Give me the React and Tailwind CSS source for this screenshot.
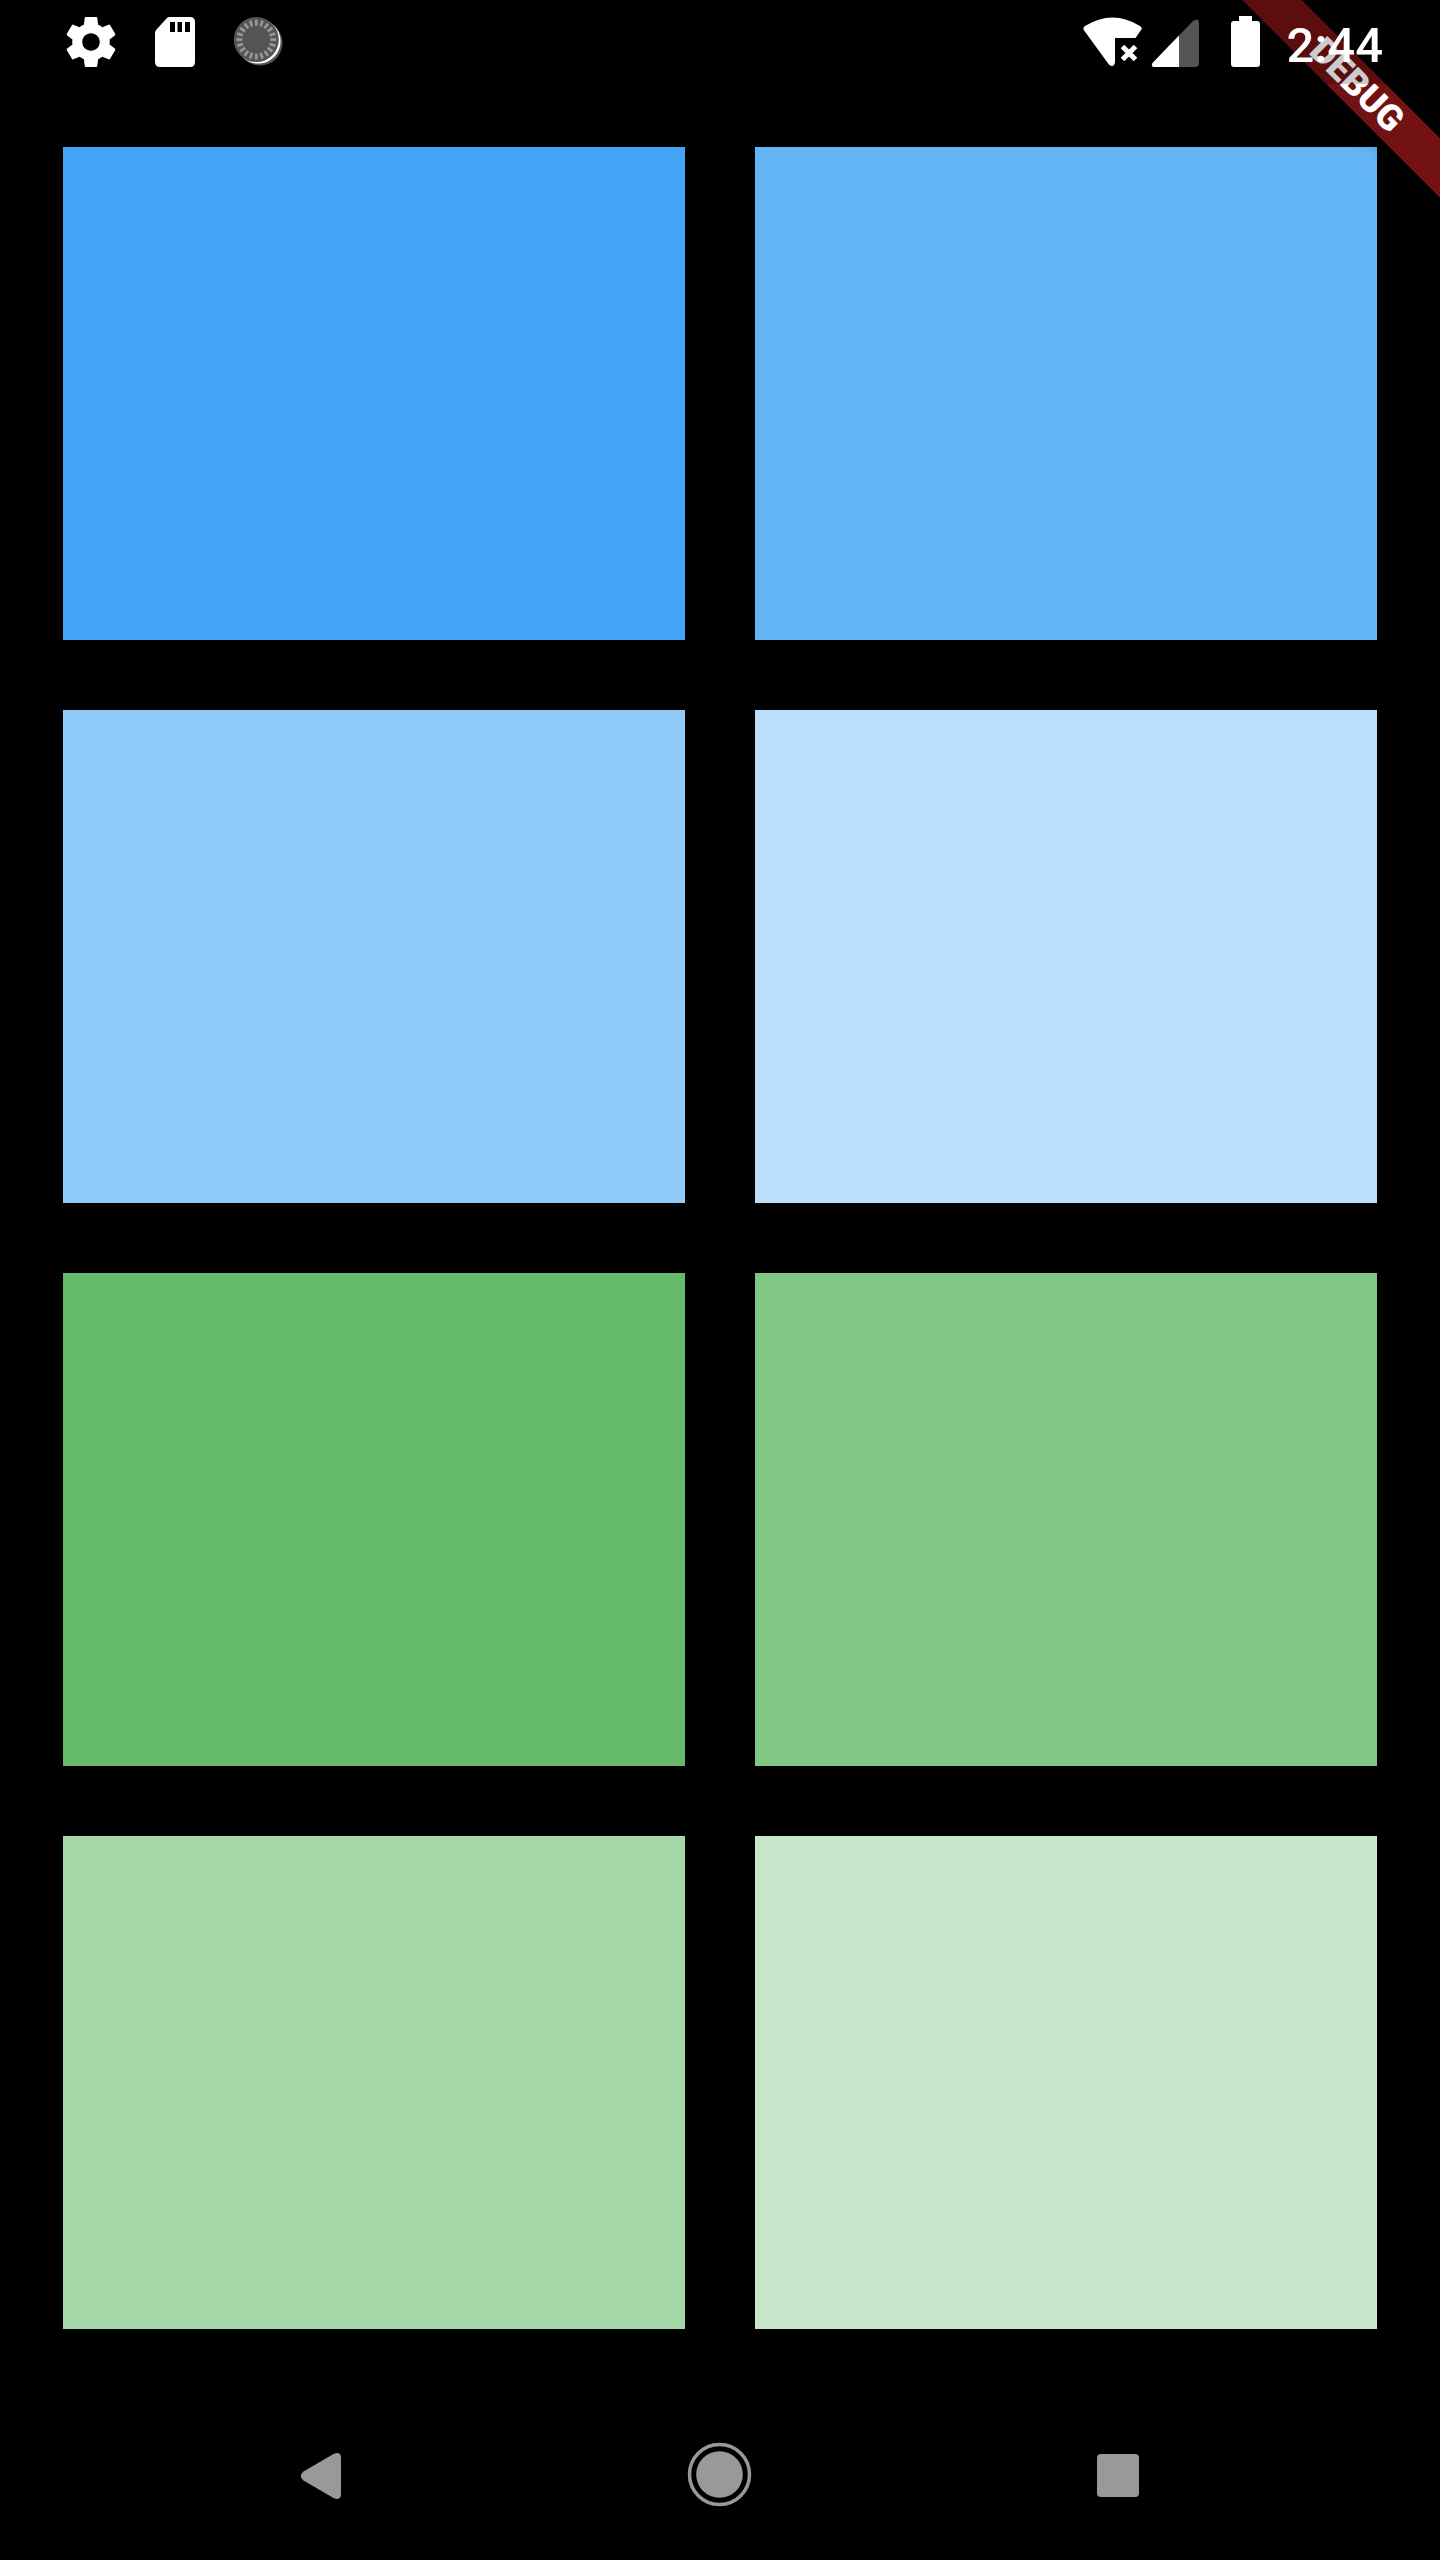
const tiles = [
  "bg-[#42a5f5]", "bg-[#64b5f6]",
  "bg-[#90caf9]", "bg-[#bbdefb]",
  "bg-[#66bb6a]", "bg-[#81c784]",
  "bg-[#a5d6a7]", "bg-[#c8e6c9]",
];

const ticks = Array.from({ length: 20 }, (_, i) => (i * 360) / 20);

function Gear() {
  return (
    <svg width="60" height="60" viewBox="0 0 24 24" fill="#fff" className="shrink-0">
      <path fillRule="evenodd" d="M19.43 12.98c.04-.32.07-.64.07-.98s-.03-.66-.07-.98l2.11-1.65c.19-.15.24-.42.12-.64l-2-3.46c-.12-.22-.39-.3-.61-.22l-2.49 1c-.52-.4-1.08-.73-1.69-.98l-.38-2.65C14.46 2.18 14.25 2 14 2h-4c-.25 0-.46.18-.49.42l-.38 2.65c-.61.25-1.17.59-1.69.98l-2.49-1c-.23-.09-.49 0-.61.22l-2 3.46c-.13.22-.07.49.12.64l2.11 1.65c-.04.32-.07.65-.07.98s.03.66.07.98l-2.11 1.65c-.19.15-.24.42-.12.64l2 3.46c.12.22.39.3.61.22l2.49-1c.52.4 1.08.73 1.69.98l.38 2.65c.03.24.24.42.49.42h4c.25 0 .46-.18.49-.42l.38-2.65c.61-.25 1.17-.59 1.69-.98l2.49 1c.23.09.49 0 .61-.22l2-3.46c.12-.22.07-.49-.12-.64l-2.11-1.65zM12 15.5c-1.93 0-3.5-1.57-3.5-3.5s1.57-3.5 3.5-3.5 3.5 1.57 3.5 3.5-1.57 3.5-3.5 3.5z" />
    </svg>
  );
}

function SdCard() {
  return (
    <svg width="50" height="60" viewBox="150 12 50 60" className="ml-[29px] shrink-0">
      <path fill="#fff" fillRule="evenodd" d="M169 17H190Q195 17 195 22V62Q195 67 190 67H160Q155 67 155 62V33Q155 31 156.5 29.5L167 18Q168 17 169 17ZM170 22V32H175V22ZM177.5 22V32H182V22ZM185 22V32H190V22Z" />
    </svg>
  );
}

function Loader() {
  return (
    <svg width="60" height="60" viewBox="230 12 60 60" className="ml-[30px] shrink-0">
      <circle cx="260" cy="43" r="22.5" fill="#555" />
      <circle cx="258.3" cy="41.3" r="22.3" fill="#fff" />
      <circle cx="256.3" cy="39.6" r="22.5" fill="#555" />
      {ticks.map((a) => (
        <line
          key={a}
          x1="256.3"
          y1="25.6"
          x2="256.3"
          y2="19.6"
          stroke="#999"
          strokeWidth="2.6"
          transform={`rotate(${a} 256.3 39.6)`}
        />
      ))}
    </svg>
  );
}

function Wifi() {
  return (
    <svg width="65" height="60" viewBox="1080 12 65 60" className="shrink-0">
      <path fill="#fff" d="M1085 26Q1112.5 9 1140 26Q1143 28 1141 30L1135.5 38H1115V62Q1114.5 66 1112 66Q1110 66 1108.5 64L1084.5 31Q1082 28 1085 26Z" />
      <path stroke="#fff" strokeWidth="5" d="M1122.5 46.5L1135.5 59.5M1135.5 46.5L1122.5 59.5" />
    </svg>
  );
}

function Signal() {
  const d = "M1153 62.5L1193 21Q1196 18.6 1198 20Q1199 21 1199 23V63Q1199 67 1195 67H1155Q1152 67 1151.8 65Q1151.8 63.7 1153 62.5Z";
  return (
    <svg width="55" height="60" viewBox="1148 12 55 60" className="ml-[3px] shrink-0">
      <defs>
        <clipPath id="signal-level">
          <rect x="1148" y="12" width="31" height="60" />
        </clipPath>
      </defs>
      <path fill="#555" d={d} />
      <path fill="#fff" d={d} clipPath="url(#signal-level)" />
    </svg>
  );
}

function Battery() {
  return (
    <svg width="36" height="60" viewBox="1228 12 36 60" className="ml-[25px] shrink-0">
      <path fill="#fff" d="M1239 16H1252V21H1257Q1260 21 1260 24V64Q1260 67 1257 67H1234Q1231 67 1231 64V24Q1231 21 1234 21H1239Z" />
    </svg>
  );
}

function NavIcons() {
  return (
    <div className="flex h-[168px] mt-[63px] pl-[295px]">
      <svg width="52" height="168" viewBox="295 2392 52 168" className="shrink-0">
        <path fill="#999" d="M303.5 2471.5L333.5 2454Q341 2451 341 2458V2494Q341 2501 333.5 2498L303.5 2480.5Q298 2476 303.5 2471.5Z" />
      </svg>
      <svg width="80" height="168" viewBox="680 2392 80 168" className="ml-[333px] shrink-0">
        <circle cx="719.5" cy="2474.5" r="30" fill="none" stroke="#999" strokeWidth="3.5" />
        <circle cx="719.5" cy="2474.5" r="23.3" fill="#999" />
      </svg>
      <svg width="70" height="168" viewBox="1085 2392 70 168" className="ml-[325px] shrink-0">
        <rect x="1097" y="2454" width="42" height="43" rx="4" fill="#999" />
      </svg>
    </div>
  );
}

export default function App() {
  return (
    <div className="relative w-[1440px] h-[2560px] overflow-hidden bg-black font-['Roboto',sans-serif]">
      <main className="grid grid-cols-[622px_622px] auto-rows-[493px] gap-[70px] pt-[147px] px-[63px]">
        {tiles.map((c) => (
          <div key={c} className={c} />
        ))}
      </main>
      <NavIcons />

      <div className="absolute left-[1176px] top-[63px] w-[360px] h-[42px] rotate-45 flex items-center justify-center pl-[3px] bg-[#b71c1ca0] shadow-[0_0_21px_rgba(0,0,0,0.5)]">
        <span className="text-white text-[36px] leading-[42px] font-black">DEBUG</span>
      </div>

      <header className="absolute inset-x-0 top-0 h-[84px] bg-black/20 flex items-center justify-between pl-[61px] pr-[57px]">
        <div className="flex items-center">
          <Gear />
          <SdCard />
          <Loader />
        </div>
        <div className="flex items-center">
          <Wifi />
          <Signal />
          <Battery />
          <span className="ml-[23px] pt-[6px] text-white text-[49px] leading-[57px] font-medium">2:44</span>
        </div>
      </header>
    </div>
  );
}
